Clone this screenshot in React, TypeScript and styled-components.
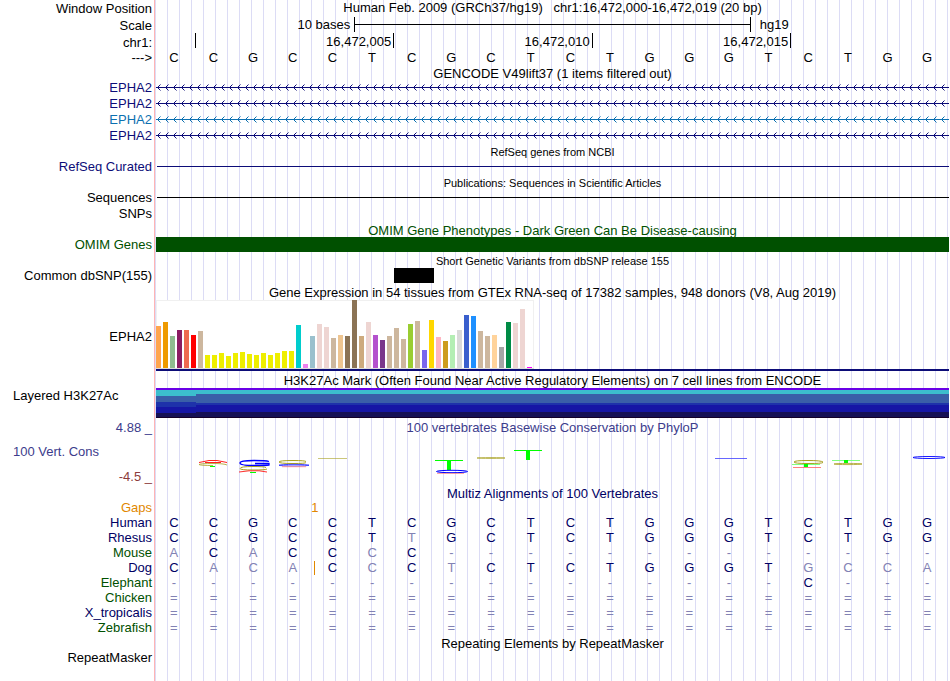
import React from "react";
import styled, { createGlobalStyle } from "styled-components";

const GlobalStyle = createGlobalStyle`
  *, *::before, *::after { box-sizing: border-box; }
  body {
    margin: 0;
    background: #fff;
    color: #000;
    font-family: "Liberation Sans", Arial, sans-serif;
    font-size: 13px;
  }
`;

const NAVY = "#0c0c78";
const ALIGN_NAVY = "#000064";
const GREEN = "#005000";
const MISMATCH = "#8282b4";
const ORANGE = "#e18700";

const Browser = styled.main`
  display: grid;
  grid-template-columns: 154px 1fr;
  min-height: 100vh;
  padding-right: 1px;
  overflow: hidden;
`;

const Labels = styled.div`
  display: flex;
  flex-direction: column;
  padding-right: 2px;
`;

const Tracks = styled.div`
  display: flex;
  flex-direction: column;
  min-width: 0;
  border-left: 1px solid #ffb4b4;
  padding-left: 1px;
  background: linear-gradient(to right, #dcdcf5 1px, transparent 1px) 12px 0 / 12px 100%;
`;

const Label = styled.div<{ $h: number; $color?: string; $left?: boolean }>`
  display: flex;
  align-items: center;
  justify-content: ${(p) => (p.$left ? "flex-start" : "flex-end")};
  height: ${(p) => p.$h}px;
  padding-left: 13px;
  color: ${(p) => p.$color ?? "#000"};
  white-space: pre;
`;

const Title = styled.h2<{ $h: number; $color?: string; $small?: boolean }>`
  display: flex;
  align-items: center;
  justify-content: center;
  height: ${(p) => p.$h}px;
  margin: 0;
  color: ${(p) => p.$color ?? "#000"};
  font-size: ${(p) => (p.$small ? 11 : 13)}px;
  font-weight: 400;
  white-space: pre;
`;

const Row = styled.div<{ $h: number }>`
  display: flex;
  align-items: center;
  height: ${(p) => p.$h}px;
`;

const ScaleRow = styled.div`
  display: grid;
  grid-template-columns: 1fr 2fr 1fr;
  align-items: center;
  height: 17px;
`;

const ScaleBar = styled.div`
  display: flex;
  align-items: center;
  height: 15px;
  border: solid #000;
  border-width: 0 1px;
  &::before {
    content: "";
    flex: 1;
    height: 1px;
    background: #000;
  }
`;

const ScaleText = styled.span<{ $end?: boolean }>`
  padding: 0 4px 0 9px;
  text-align: ${(p) => (p.$end ? "right" : "left")};
`;

const Ruler = styled.div`
  display: grid;
  grid-template-columns: 1fr 5fr 5fr 5fr 4fr;
  height: 16px;
  margin-right: -1px;
`;

const Tick = styled.div`
  height: 15px;
  padding-right: 2px;
  border-right: 1px solid #000;
  line-height: 17px;
  text-align: right;
`;

const Bases = styled.div<{ $h: number }>`
  display: grid;
  grid-template-columns: repeat(20, 1fr);
  align-items: center;
  height: ${(p) => p.$h}px;
`;

const Base = styled.span<{ $color: string }>`
  padding-right: 4px;
  color: ${(p) => p.$color};
  text-align: center;
`;

const Line = styled.div<{ $color: string }>`
  flex: 1;
  height: 1px;
  margin-left: 1px;
  background: ${(p) => p.$color};
`;

const OmimBar = styled.div`
  height: 15px;
  background: ${GREEN};
`;

const VariantRow = styled.div`
  display: grid;
  grid-template-columns: 6fr 1fr 13fr;
  height: 15px;
`;

const Variant = styled.div`
  grid-column: 2;
  background: #000;
`;

const Expression = styled.div`
  height: 71px;
  border-bottom: 2px solid ${NAVY};
`;

const Layered = styled.div`
  display: flex;
  height: 30px;
`;

const Stack = styled.div<{ $grow: number }>`
  display: flex;
  flex: ${(p) => p.$grow} 1 0;
  flex-direction: column;
`;

const Band = styled.div<{ $h: number; $color: string }>`
  height: ${(p) => p.$h}px;
  background: ${(p) => p.$color};
`;

const Drawing = styled.svg`
  display: block;
  flex: none;
`;

const GapRow = styled.div`
  display: grid;
  grid-template-columns: 4fr 16fr;
  align-items: center;
  height: 15px;
  color: ${ORANGE};
`;

const GapCount = styled.span`
  margin-right: -4px;
  text-align: right;
`;

const GappedRow = styled.div`
  display: grid;
  & > * { grid-area: 1 / 1; }
`;

const GapMark = styled.div`
  justify-self: end;
  width: 1px;
  height: 14px;
  background: ${ORANGE};
`;

const GeneArrows = ({ id, color }: { id: string; color: string }) => (
  <Drawing width="100%" height="16" shapeRendering="crispEdges" aria-hidden="true">
    <defs>
      <pattern id={id} width="8" height="16" patternUnits="userSpaceOnUse">
        <g fill={color}>
          <rect x="0" y="7" width="8" height="1" />
          <rect x="2" y="6" width="1" height="3" />
          <rect x="3" y="5" width="1" height="1" />
          <rect x="3" y="9" width="1" height="1" />
          <rect x="4" y="4" width="1" height="1" opacity="0.5" />
          <rect x="4" y="10" width="1" height="1" opacity="0.5" />
        </g>
      </pattern>
    </defs>
    <rect width="100%" height="16" fill={`url(#${id})`} />
  </Drawing>
);

const tan = "#cdb79e";
const rose = "#eed5d2";
const yellow = "#eeee00";
const tissues: [number, string][] = [
  [42, "#ffa54f"], [46, "#ee9a00"], [32, "#8fbc8f"], [38, "#8b1c62"], [38, "#ee6a50"],
  [33, "#ff0000"], [37, tan],
  ...[13, 13, 15, 12, 15, 16, 14, 13, 15, 13, 15, 17, 17].map((h): [number, string] => [h, yellow]),
  [43, "#00cdcd"], [4, "#ee82ee"], [32, "#9ac0cd"], [44, rose], [41, rose], [30, tan],
  [33, "#eec591"], [32, "#8b7355"], [68, "#8b7355"], [32, "#cdaa7d"], [46, rose],
  [33, "#b452cd"], [28, "#7a378b"], [32, tan], [40, tan], [29, tan], [44, "#9acd32"],
  [47, tan], [18, "#7a67ee"], [48, "#ffd700"], [31, "#ffb6c1"], [27, "#cd9b1d"],
  [33, "#b4eeb4"], [38, "#d9d9d9"], [53, "#3a5fcd"], [52, "#1e90ff"], [37, tan],
  [32, tan], [33, "#ffd39b"], [21, "#a6a6a6"], [46, "#008b45"], [45, rose], [59, rose],
  [1, "#ff00ff"],
];

const ExpressionChart = () => (
  <Drawing width="378" height="69" shapeRendering="crispEdges" role="img" aria-label="EPHA2 expression">
    <rect width="378" height="69" fill="#f0f0f0" />
    <rect x="1" y="1" width="376" height="67" fill="#fff" />
    <rect y="68" width="378" height="1" fill="#dcdcdc" />
    {tissues.map(([h, color], i) => (
      <rect key={i} x={i * 7} y={68 - h} width="5" height={h} fill={color} />
    ))}
  </Drawing>
);

const OLIVE = "#a8a020";

const Conservation = () => (
  <Drawing width="100%" height="50" viewBox="0 2 793 50" preserveAspectRatio="none" fill="none" aria-hidden="true">
    <path d="M43 28.500 L53 26.500 H61 L71 28.500 M49 28.500H65" stroke="#ff2020" />
    <path d="M71 31 Q68 29.500 57 29.500 Q44 29.500 43 30.500 Q44 31.500 57 31.500" stroke={OLIVE} strokeWidth="0.800" />
    <path d="M54 32.500H59" stroke="#00ff00" />
    <path d="M113 27.500Q110 26.500 98 26.500Q84 26.500 84 29Q84 31.500 98 31.500Q110 31.500 113 31V29.500H99" stroke="#0000ff" strokeWidth="1.300" />
    <path d="M110 33.500Q108 32.500 97 32.500Q84 32.500 84 34.500Q84 36 97 36Q110 36 111 35" stroke={OLIVE} />
    <path d="M83 38 L93 36.800 H103 L111 38" stroke="#ff3030" />
    <path d="M94 38.500H100" stroke="#00ff00" />
    <path d="M150 27.500Q149 26.500 137 26.500Q123 26.500 123 28Q123 29.500 137 29.500Q150 29.500 150 28.500" stroke={OLIVE} />
    <ellipse cx="138" cy="31.200" rx="15" ry="0.800" stroke="#0000ff" strokeWidth="0.700" />
    <path d="M126 32.700H150" stroke="#ff8080" strokeWidth="0.800" />
    <path d="M162 24.500H191" stroke={OLIVE} strokeWidth="0.600" />
    <path d="M279 26.500H307" stroke="#00ff00" />
    <path d="M293 26V36" stroke="#00ff00" strokeWidth="4" />
    <ellipse cx="296" cy="37.500" rx="15.500" ry="1.200" stroke="#0000ff" />
    <path d="M281 39.500H308" stroke="#ff8080" strokeWidth="0.700" />
    <ellipse cx="335" cy="24" rx="14" ry="0.500" stroke={OLIVE} strokeWidth="0.700" />
    <path d="M358 16.500H386" stroke="#00ff00" />
    <path d="M372 16V26" stroke="#00ff00" strokeWidth="4" />
    <path d="M559 24.500H591" stroke="#4040ff" strokeWidth="0.800" />
    <path d="M667 28Q665 26.500 652 26.500Q638 26.500 638 28Q638 29.500 652 29.500Q666 29.500 667 28.500" stroke={OLIVE} />
    <path d="M636 30.500H664" stroke="#80ff80" />
    <path d="M648 31.500H652" stroke="#00ff00" strokeWidth="3" />
    <path d="M637 33.500H665" stroke="#ff6060" strokeWidth="0.800" />
    <path d="M676 26.500H704" stroke="#80ff80" />
    <path d="M688 27.500H692" stroke="#00ff00" strokeWidth="3" />
    <ellipse cx="692" cy="30" rx="14" ry="0.600" stroke={OLIVE} strokeWidth="0.800" />
    <ellipse cx="773" cy="23.500" rx="16" ry="1" stroke="#0000ff" strokeWidth="0.900" />
  </Drawing>
);

const HUMAN = "CCGCCTCGCTCTGGGTCTGG";

const BaseRow = ({ seq, h, color, reference }: { seq: string; h: number; color: string; reference?: string }) => (
  <Bases $h={h}>
    {seq.split("").map((b, i) => (
      <Base key={i} $color={reference && reference[i] !== b ? MISMATCH : color}>{b}</Base>
    ))}
  </Bases>
);

const species: { name: string; color: string; seq: string; gap?: boolean }[] = [
  { name: "Human", color: ALIGN_NAVY, seq: HUMAN },
  { name: "Rhesus", color: ALIGN_NAVY, seq: "CCGCCTTGCTCTGGGTCTGG" },
  { name: "Mouse", color: GREEN, seq: "ACACCCC-------------" },
  { name: "Dog", color: ALIGN_NAVY, seq: "CACACCCTCTCTGGGTGCCA", gap: true },
  { name: "Elephant", color: GREEN, seq: "----------------C---" },
  { name: "Chicken", color: GREEN, seq: "====================" },
  { name: "X_tropicalis", color: ALIGN_NAVY, seq: "====================" },
  { name: "Zebrafish", color: GREEN, seq: "====================" },
];

const genes = [NAVY, NAVY, "#0c70b0", NAVY];

export default function App() {
  return (
    <>
      <GlobalStyle />
      <Browser>
        <Labels>
          <Label $h={17}>Window Position</Label>
          <Label $h={17}>Scale</Label>
          <Label $h={16}>chr1:</Label>
          <Label $h={15}>---&gt;</Label>
          <Label $h={14} />
          {genes.map((c, i) => <Label key={i} $h={16} $color={c}>EPHA2</Label>)}
          <Label $h={15} />
          <Label $h={16} $color={NAVY}>RefSeq Curated</Label>
          <Label $h={15} />
          <Label $h={16}>Sequences</Label>
          <Label $h={16}>SNPs</Label>
          <Label $h={16} />
          <Label $h={15} $color={GREEN}>OMIM Genes</Label>
          <Label $h={15} />
          <Label $h={16}>Common dbSNP(155)</Label>
          <Label $h={17} />
          <Label $h={72}>EPHA2</Label>
          <Label $h={15} />
          <Label $h={16} $left>Layered H3K27Ac</Label>
          <Label $h={16} />
          <Label $h={16} $color="#3c3c8c">4.88 _</Label>
          <Label $h={32} $left $color="#3c3c8c">100 Vert. Cons</Label>
          <Label $h={18} $color="#8c3c3c">-4.5 _</Label>
          <Label $h={15} />
          <Label $h={15} $color={ORANGE}>Gaps</Label>
          {species.map((s) => <Label key={s.name} $h={15} $color={s.color}>{s.name}</Label>)}
          <Label $h={15} />
          <Label $h={15}>RepeatMasker</Label>
        </Labels>
        <Tracks>
          <Title as="h1" $h={15}>{"Human Feb. 2009 (GRCh37/hg19)   chr1:16,472,000-16,472,019 (20 bp)"}</Title>
          <Row $h={1} />
          <ScaleRow>
            <ScaleText $end>10 bases</ScaleText>
            <ScaleBar />
            <ScaleText>hg19</ScaleText>
          </ScaleRow>
          <Ruler>
            <Tick />
            <Tick>16,472,005</Tick>
            <Tick>16,472,010</Tick>
            <Tick>16,472,015</Tick>
          </Ruler>
          <BaseRow seq={HUMAN} h={16} color="#000" />
          <Row $h={1} />
          <Title $h={14}>GENCODE V49lift37 (1 items filtered out)</Title>
          {genes.map((c, i) => <GeneArrows key={i} id={`gene-${i}`} color={c} />)}
          <Title $h={16} $small>RefSeq genes from NCBI</Title>
          <Row $h={13}><Line $color={NAVY} /></Row>
          <Title $h={20} $small>Publications: Sequences in Scientific Articles</Title>
          <Row $h={9}><Line $color="#000" /></Row>
          <Row $h={22} />
          <Title $h={13} $color={GREEN}>OMIM Gene Phenotypes - Dark Green Can Be Disease-causing</Title>
          <OmimBar />
          <Row $h={2} />
          <Title $h={14} $small>Short Genetic Variants from dbSNP release 155</Title>
          <VariantRow><Variant /></VariantRow>
          <Row $h={1} />
          <Title $h={16}>Gene Expression in 54 tissues from GTEx RNA-seq of 17382 samples, 948 donors (V8, Aug 2019)</Title>
          <Expression><ExpressionChart /></Expression>
          <Row $h={2} />
          <Title $h={15}>H3K27Ac Mark (Often Found Near Active Regulatory Elements) on 7 cell lines from ENCODE</Title>
          <Layered>
            <Stack $grow={1}>
              <Band $h={2} $color="#6a00e6" />
              <Band $h={6} $color="#3cbecd" />
              <Band $h={6} $color="#3a5fa8" />
              <Band $h={5} $color="#1e32aa" />
              <Band $h={6} $color="#1616a5" />
              <Band $h={4} $color="#161055" />
              <Band $h={1} $color="#140028" />
            </Stack>
            <Stack $grow={19}>
              <Band $h={2} $color="#6a00e6" />
              <Band $h={4} $color="#3cbecd" />
              <Band $h={9} $color="#3a5fa8" />
              <Band $h={2} $color="#1e32aa" />
              <Band $h={7} $color="#1616a5" />
              <Band $h={5} $color="#161055" />
              <Band $h={1} $color="#140028" />
            </Stack>
          </Layered>
          <Title $h={18} $color="#3c3c8c">100 vertebrates Basewise Conservation by PhyloP</Title>
          <Conservation />
          <Title $h={14} $color={ALIGN_NAVY}>Multiz Alignments of 100 Vertebrates</Title>
          <GapRow><GapCount>1</GapCount></GapRow>
          {species.map((s) => {
            const row = <BaseRow key={s.name} seq={s.seq} h={15} color={ALIGN_NAVY} reference={HUMAN} />;
            return s.gap ? (
              <GappedRow key={s.name}>
                {row}
                <GapRow><GapMark /></GapRow>
              </GappedRow>
            ) : (
              row
            );
          })}
          <Title $h={16}>Repeating Elements by RepeatMasker</Title>
        </Tracks>
      </Browser>
    </>
  );
}
